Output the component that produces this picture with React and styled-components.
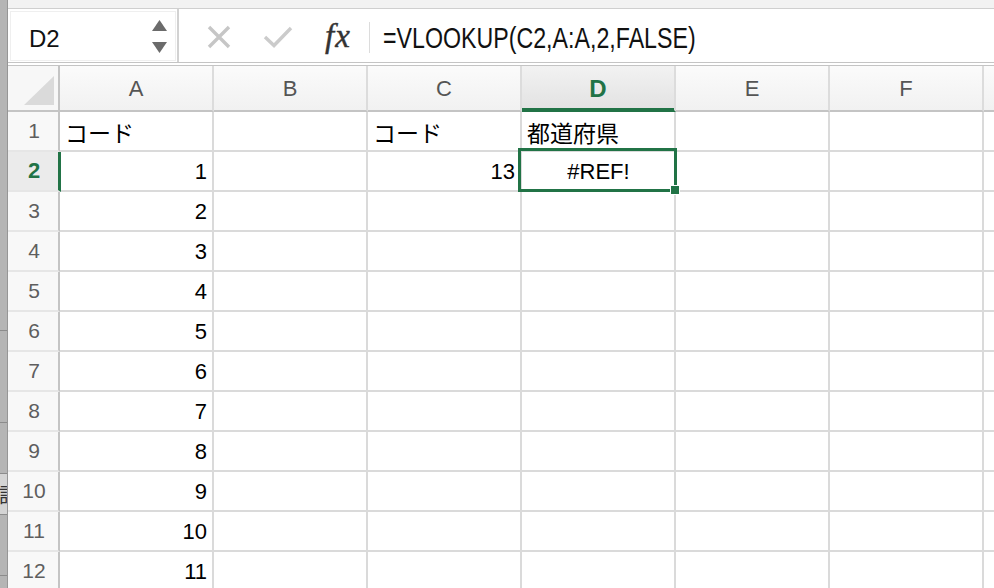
import React from "react";
import styled, { createGlobalStyle } from "styled-components";

const GlobalStyle = createGlobalStyle`
  html, body { margin: 0; padding: 0; background: #ffffff; overflow: hidden; }
  #root { width: 994px; height: 588px; }
`;

const GREEN = "#217346";
const SANS = `"Liberation Sans", Arial, "Noto Sans CJK JP", sans-serif`;

const Window = styled.div`
  display: flex;
  width: 994px;
  height: 588px;
  overflow: hidden;
  background: #fff;
`;

const LeftStrip = styled.div`
  width: 7px;
  flex: none;
  display: flex;
  flex-direction: column;
  background: #b5b5b5;
  border-right: 1px solid #969696;
  overflow: hidden;
`;

const StripSeg = styled.div`
  flex: none;
  height: ${(p) => p.$h}px;
  background: ${(p) => p.$bg || "transparent"};
  border-bottom: ${(p) => (p.$line ? "1px solid #8c8c8c" : "none")};
  display: flex;
  align-items: center;
  justify-content: flex-end;
  overflow: hidden;
  font: 20px ${SANS};
  color: #333;
  white-space: nowrap;
`;

const StripText = styled.span`
  margin-right: -12px;
`;

const Main = styled.div`
  flex: 1;
  display: flex;
  flex-direction: column;
  min-width: 0;
`;

const TopStrip = styled.div`
  height: 8px;
  background: #f2f2f2;
  border-bottom: 1px solid #cfcfcf;
  flex: none;
`;

const FormulaBar = styled.div`
  height: 53px;
  flex: none;
  display: flex;
  align-items: stretch;
  background: #fff;
  border-bottom: 4px double #c4c4c4;
`;

const NameBox = styled.div`
  margin: 2px 0 1px 2px;
  width: 166px;
  box-sizing: border-box;
  background: #fff;
  border: 1px solid #efefef;
  display: flex;
  align-items: center;
  justify-content: space-between;
  padding: 5px 8px 0 18px;
  font: 24px ${SANS};
  color: #111;
`;

const Spinner = styled.div`
  display: flex;
  flex-direction: column;
  gap: 11px;
  margin-top: -5px;
`;

const Divider = styled.div`
  width: 2px;
  margin-left: 1px;
  background: #d2d2d2;
  flex: none;
`;

const IconSlot = styled.div`
  width: ${(p) => p.$w}px;
  padding-left: ${(p) => p.$pl || 0}px;
  box-sizing: border-box;
  display: flex;
  align-items: center;
  justify-content: center;
  flex: none;
`;

const Fx = styled.span`
  font: italic 33px "Liberation Serif", "DejaVu Serif", serif;
  color: #333;
  letter-spacing: 1px;
  margin-top: 1px;
  -webkit-text-stroke: 0.4px #333;
`;

const Sep = styled.div`
  width: 1px;
  height: 31px;
  align-self: center;
  background: #dcdcdc;
  flex: none;
  margin-top: 3px;
`;

const FormulaText = styled.div`
  margin-left: 13px;
  display: flex;
  align-items: center;
  padding-top: 6px;
  font: 29px ${SANS};
  color: #111;
  white-space: nowrap;
  transform: scaleX(0.8);
  transform-origin: left center;
`;

const Grid = styled.div`
  display: grid;
  grid-template-columns: 52px repeat(7, 154px);
  grid-auto-rows: 40px;
  grid-template-rows: 46px;
`;

const Corner = styled.div`
  box-sizing: border-box;
  border-right: 2px solid #c4c4c4;
  border-bottom: 2px solid #c4c4c4;
  background: #f7f7f7;
  display: flex;
  align-items: flex-end;
  justify-content: flex-end;
  padding: 0 4px 5px 0;
`;

const ColHead = styled.div`
  box-sizing: border-box;
  border-right: 2px solid #dcdcdc;
  border-bottom: 2px solid ${(p) => (p.$active ? GREEN : "#c4c4c4")};
  box-shadow: ${(p) => (p.$active ? `inset 0 -2px 0 ${GREEN}` : "none")};
  background: ${(p) =>
    p.$active
      ? "linear-gradient(#f2f2f2, #e2e2e2)"
      : "linear-gradient(#fbfbfb, #f1f1f1)"};
  display: flex;
  align-items: center;
  justify-content: center;
  padding-top: 2px;
  font: ${(p) => (p.$active ? "bold 24px" : "22px")} ${SANS};
  color: ${(p) => (p.$active ? GREEN : "#555")};
`;

const RowHead = styled.div`
  box-sizing: border-box;
  border-right: ${(p) => (p.$active ? `3px solid ${GREEN}` : "2px solid #c4c4c4")};
  margin-right: ${(p) => (p.$active ? "-1px" : "0")};
  border-bottom: 2px solid #e6e6e6;
  background: ${(p) => (p.$active ? "#ebebeb" : "#f8f8f8")};
  display: flex;
  align-items: center;
  justify-content: center;
  padding-left: 2px;
  font: ${(p) => (p.$active ? "bold 22px" : "21px")} ${SANS};
  color: ${(p) => (p.$active ? GREEN : "#5e5e5e")};
  position: relative;
  z-index: 1;
`;

const Cell = styled.div`
  box-sizing: border-box;
  position: relative;
  border-right: 2px solid #dadada;
  border-bottom: 2px solid #dadada;
  display: flex;
  align-items: center;
  justify-content: ${(p) =>
    p.$align === "right" ? "flex-end" : p.$align === "center" ? "center" : "flex-start"};
  padding: 2px 5px 0 6px;
  font: 22px ${SANS};
  color: #000;
  white-space: nowrap;
`;

const Jp = styled.span`
  font: 23px "Noto Sans CJK JP", sans-serif;
  margin-left: -1px;
`;

const Selection = styled.div`
  position: absolute;
  top: -4px;
  left: -4px;
  right: -3px;
  bottom: -2px;
  border: 3px solid ${GREEN};
  pointer-events: none;
  z-index: 2;
`;

const FillHandle = styled.div`
  position: absolute;
  right: -6px;
  bottom: -6px;
  width: 8px;
  height: 8px;
  background: ${GREEN};
  border: 1px solid #fff;
`;

const cols = ["A", "B", "C", "D", "E", "F", "G"];
const rows = [
  { A: "コード", C: "コード", D: "都道府県" },
  { A: 1, C: 13, D: "#REF!" },
  { A: 2 }, { A: 3 }, { A: 4 }, { A: 5 }, { A: 6 },
  { A: 7 }, { A: 8 }, { A: 9 }, { A: 10 }, { A: 11 },
];

const alignOf = (v, col, r) => {
  if (r === 1 && col === "D") return "center";
  return typeof v === "number" ? "right" : "left";
};

const isJp = (v) => typeof v === "string" && /[\u3000-\u9fff]/.test(v);

export default function App() {
  return (
    <>
      <GlobalStyle />
      <Window>
        <LeftStrip>
          <StripSeg $h={330} $line />
          <StripSeg $h={91} $line />
          <StripSeg $h={50} $line />
          <StripSeg $h={40} $bg="#d4d4d4" $line>
            <StripText>記</StripText>
          </StripSeg>
          <StripSeg $h={60} $line>
            <StripText>1</StripText>
          </StripSeg>
          <StripSeg $h={20} />
        </LeftStrip>
        <Main>
          <TopStrip />
          <FormulaBar>
            <NameBox>
              <span>D2</span>
              <Spinner>
                <svg width="15" height="11" viewBox="0 0 15 11">
                  <polygon points="7.5,0 15,11 0,11" fill="#6b6b6b" />
                </svg>
                <svg width="15" height="11" viewBox="0 0 15 11">
                  <polygon points="0,0 15,0 7.5,11" fill="#6b6b6b" />
                </svg>
              </Spinner>
            </NameBox>
            <Divider />
            <IconSlot $w={80}>
              <svg width="24" height="24" viewBox="0 0 24 24" style={{ marginTop: 3 }}>
                <path d="M2 2 L22 22 M22 2 L2 22" stroke="#c6c6c6" strokeWidth="3.4" fill="none" />
              </svg>
            </IconSlot>
            <IconSlot $w={38}>
              <svg width="30" height="22" viewBox="0 0 30 22" style={{ marginTop: 3 }}>
                <path d="M2 11 L11 19.5 L28 2" stroke="#cbcbcb" strokeWidth="3.4" fill="none" />
              </svg>
            </IconSlot>
            <IconSlot $w={72} $pl={10}>
              <Fx>fx</Fx>
            </IconSlot>
            <Sep />
            <FormulaText>=VLOOKUP(C2,A:A,2,FALSE)</FormulaText>
          </FormulaBar>
          <Grid>
            <Corner>
              <svg width="30" height="29" viewBox="0 0 30 29">
                <polygon points="30,0 30,29 0,29" fill="#dadada" />
              </svg>
            </Corner>
            {cols.map((c) => (
              <ColHead key={c} $active={c === "D"}>
                {c === "G" ? "" : c}
              </ColHead>
            ))}
            {rows.map((row, r) => (
              <React.Fragment key={r}>
                <RowHead $active={r === 1}>{r + 1}</RowHead>
                {cols.map((c) => {
                  const v = row[c];
                  const selected = r === 1 && c === "D";
                  return (
                    <Cell key={c} $align={alignOf(v, c, r)}>
                      {isJp(v) ? <Jp>{v}</Jp> : v}
                      {selected && (
                        <Selection>
                          <FillHandle />
                        </Selection>
                      )}
                    </Cell>
                  );
                })}
              </React.Fragment>
            ))}
          </Grid>
        </Main>
      </Window>
    </>
  );
}
